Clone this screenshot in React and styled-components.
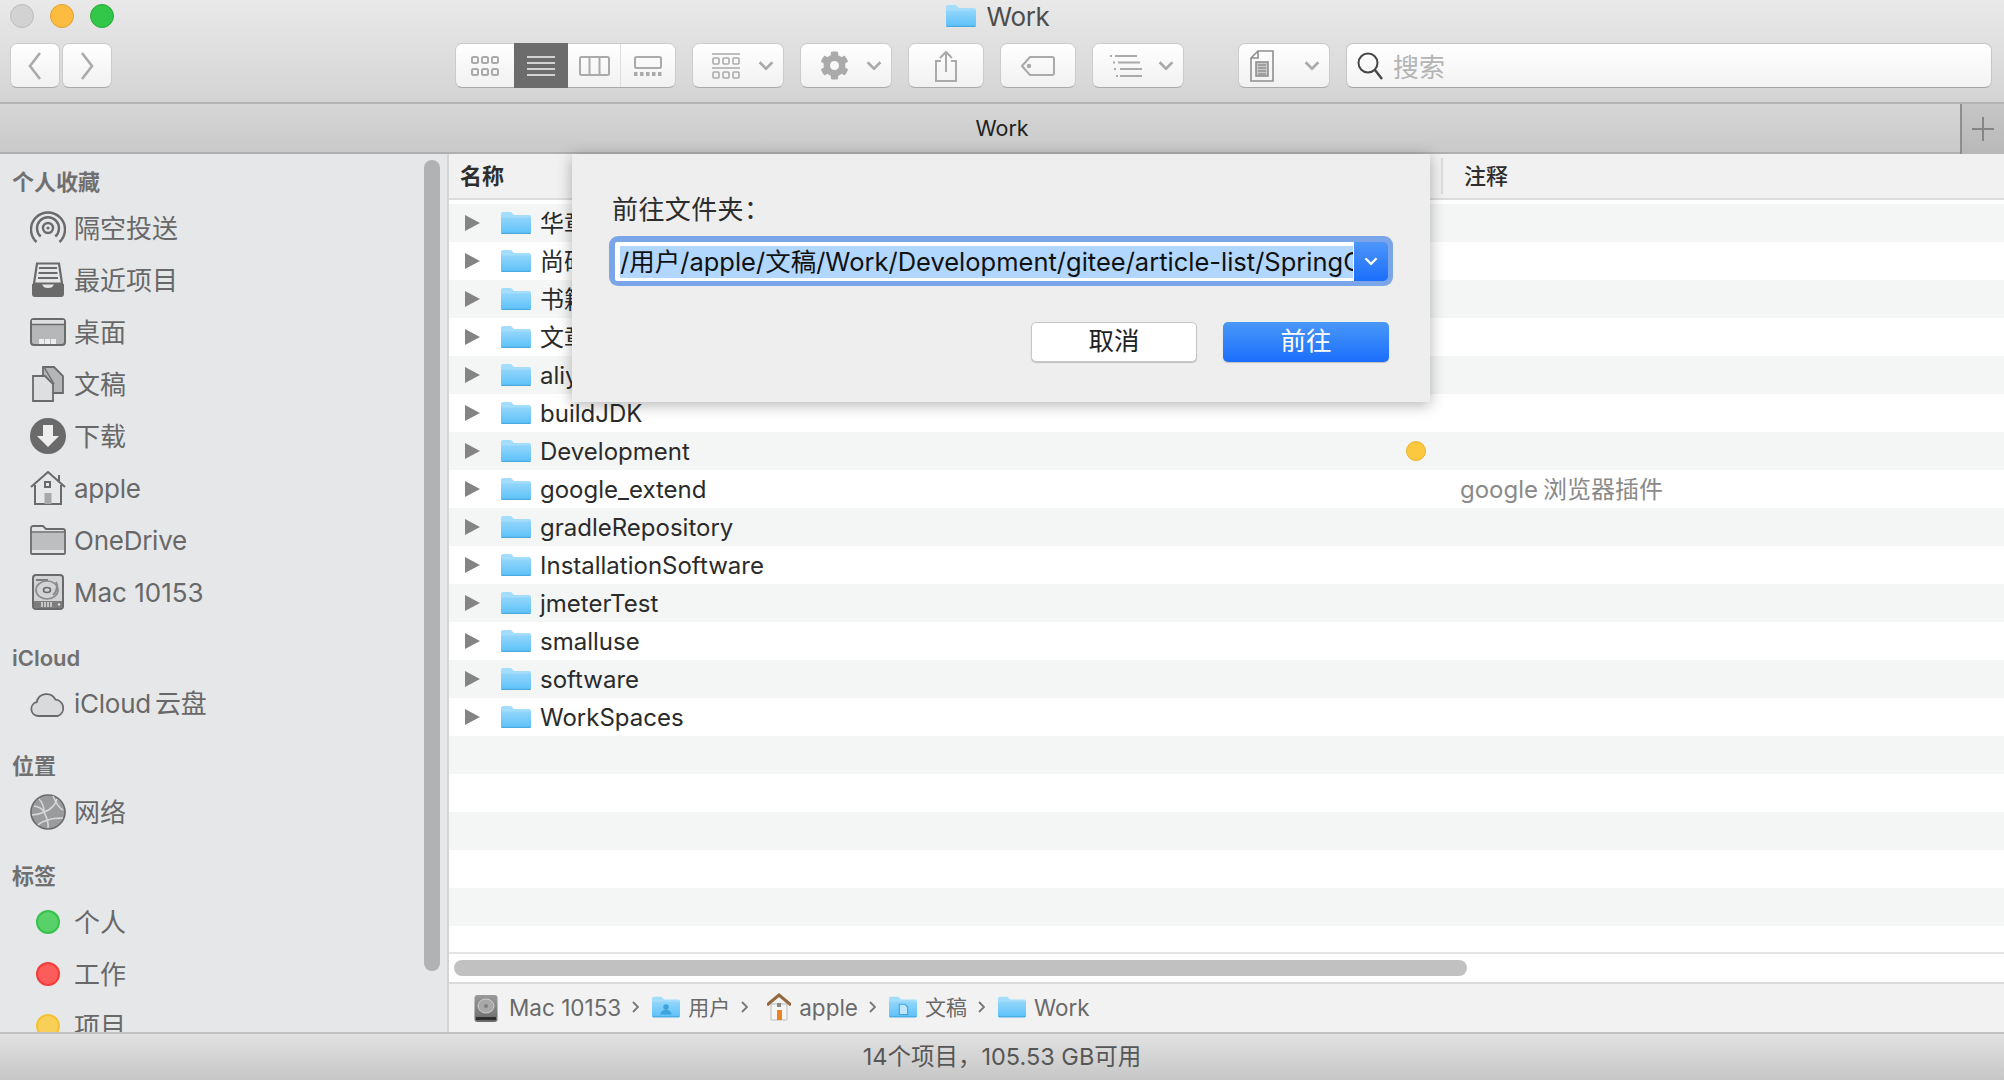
import React from "react";
import styled, { createGlobalStyle } from "styled-components";
import { FaCog } from "react-icons/fa";

const FONT = `Inter, "Noto Sans CJK SC", sans-serif`;

const Global = createGlobalStyle`
  html, body { margin: 0; padding: 0; overflow: hidden; background: #e6e7e9; }
  * { box-sizing: border-box; }
`;

const Window = styled.div`
  width: 2004px; height: 1080px; display: flex; flex-direction: column; overflow: hidden;
  font-family: ${FONT}; color: #2b2b2b;
`;
const Header = styled.header`
  height: 104px; flex: none; border-bottom: 2px solid #b4b4b4;
  background: linear-gradient(#e9e9e9, #d4d4d4);
`;
const TitleRow = styled.div`
  height: 34px; display: grid; grid-template-columns: 1fr auto 1fr; align-items: center; padding: 0 10px;
`;
const Lights = styled.div`display: flex; gap: 16px; margin-top: -2px;`;
const Light = styled.span`
  width: 24px; height: 24px; border-radius: 50%;
  background: ${p => p.$c}; border: 1px solid ${p => p.$b};
`;
const Title = styled.div`
  display: flex; align-items: center; gap: 10px; font-size: 26px; color: #4d4d4d; padding: 0 8px 2px 0; letter-spacing: -.3px;
`;
const Toolbar = styled.div`
  display: flex; margin-top: 9px; padding: 0 12px 0 10px; height: 45px;
`;
const Tool = styled.div`
  flex: none; height: 45px; width: ${p => p.$w}px; margin-left: ${p => p.$ml || 0}px;
  display: flex; align-items: center; justify-content: ${p => p.$pl ? "space-between" : "center"};
  padding: ${p => p.$pl ? `0 9px 0 ${p.$pl}px` : "0"};
  border-radius: 7px; border: 1px solid #cbcbcb; border-bottom-color: #a9a9a9;
  background: linear-gradient(#ffffff, #f1f1f1);
`;
const Segments = styled.div`
  flex: none; display: flex; height: 45px; margin-left: ${p => p.$ml}px; border-radius: 7px;
  border: 1px solid #cbcbcb; border-bottom-color: #a9a9a9; background: linear-gradient(#fff, #f1f1f1);
`;
const Segment = styled.div`
  width: ${p => p.$w}px; display: flex; align-items: center; justify-content: center;
  background: ${p => p.$on ? "#6c6c6c" : "transparent"};
  border-left: ${p => p.$line ? "1px solid #dedede" : "0"};
  margin: ${p => p.$on ? "-1px 0" : "0"};
`;
const Search = styled.div`
  flex: 1; height: 45px; margin-left: 16px; display: flex; align-items: center; gap: 10px; padding-left: 10px;
  border-radius: 7px; border: 1px solid #c6c6c6; border-bottom-color: #a5a5a5;
  background: linear-gradient(#fff, #f3f3f3); color: #b4b4b4; font-size: 26px;
`;
const TabBar = styled.div`
  height: 50px; flex: none; display: flex; border-bottom: 2px solid #b0b0b0;
  background: linear-gradient(#d6d6d6, #c9c9c9);
`;
const Tab = styled.div`flex: 1; display: flex; align-items: center; justify-content: center; font-size: 21.5px; color: #222; padding: 0 0 0 44px;`;
const AddTab = styled.div`
  width: 44px; flex: none; display: flex; align-items: center; justify-content: center;
  border-left: 2px solid #8e8e8e; background: linear-gradient(#c6c6c6, #b8b8b8); margin-bottom: -2px;
`;
const Body = styled.div`flex: 1; min-height: 0; display: flex; position: relative;`;
const Sidebar = styled.aside`
  width: 449px; flex: none; position: relative; overflow: hidden; background: #e6e7e9;
  border-right: 2px solid #d4d5d6; padding-top: 8px;
`;
const SectionLabel = styled.div`
  height: 40px; margin-top: ${p => p.$mt || 0}px; padding: 0 0 ${p => p.$lift ? 5 : 0}px 12px; display: flex; align-items: center;
  font-size: 22px; font-weight: 600; color: #707070;
`;
const Item = styled.div`
  height: 52px; display: flex; align-items: center; padding-left: 30px; gap: 8px; font-size: 26px; color: #686868;
`;
const ItemText = styled.span`padding-bottom: ${p => p.$lift || 0}px; letter-spacing: ${p => p.$tight ? "-.25px" : "0"};`;
const Hair = styled.span`display: inline-block; width: ${p => p.$w}px;`;
const IconBox = styled.span`width: 36px; height: 36px; flex: none; display: flex; align-items: center; justify-content: center;`;
const Dot = styled.span`
  width: 24px; height: 24px; border-radius: 50%; background: ${p => p.$c}; border: 2px solid ${p => p.$b};
`;
const SideThumb = styled.div`
  position: absolute; left: 424px; top: 6px; width: 16px; height: 811px; border-radius: 8px; background: #b1b2b3;
`;
const Files = styled.main`flex: 1; min-width: 0; display: flex; flex-direction: column; background: #fff;`;
const ColumnHead = styled.div`
  height: 46px; flex: none; display: flex; align-items: center; background: #f1f1f1; border-bottom: 2px solid #dcdcdc;
  font-size: 22px; font-weight: 500; color: #2e2e2e;
`;
const HeadName = styled.span`margin-left: 11px; width: 981px; font-weight: 600; padding-bottom: 5px;`;
const HeadRule = styled.span`width: 2px; height: 36px; background: #dcdcdc;`;
const HeadNote = styled.span`margin-left: 21px; padding-bottom: 5px;`;
const Rows = styled.div`flex: 1; min-height: 0; overflow: hidden; padding-top: 4px;`;
const Row = styled.div`
  height: 38px; display: grid; grid-template-columns: 52px 39px 866px 55px 1fr; align-items: center;
  background: ${p => p.$odd ? "#f4f5f5" : "#ffffff"}; font-size: 24px; color: #2b2b2b;
`;
const Arrow = styled.span`padding-left: 16px; display: flex;`;
const RowName = styled.span`white-space: nowrap; padding-bottom: ${p => p.$lift ? 3 : 0}px;`;
const Note = styled.span`color: #8a8a8a; font-size: 24px; padding-bottom: 3px; margin-left: -1px;`;
const StatusDot = styled.span`width: 20px; height: 20px; border-radius: 50%; background: #fbc840; border: 1px solid #ecb22e;`;
const HTrack = styled.div`height: 30px; flex: none; border-top: 2px solid #e4e4e4; padding: 6px 0 0 5px; background: #fff;`;
const HThumb = styled.div`width: 1013px; height: 16px; border-radius: 8px; background: #c1c1c1;`;
const PathBar = styled.div`
  height: 50px; flex: none; border-top: 2px solid #dadada; background: #f2f2f2;
  display: flex; align-items: center; padding: 0 0 2px 25px; font-size: 22.5px; color: #6a6a6a;
`;
const Crumb = styled.span`display: flex; align-items: center; gap: ${p => p.$gap || 8}px; margin-left: ${p => p.$ml || 0}px;`;
const CrumbText = styled.span`font-size: ${p => p.$cjk ? 21 : 22.5}px; padding-bottom: ${p => p.$cjk ? 2 : 0}px;`;
const Sep = styled.svg`margin: 0 13px 0 11px; flex: none;`;
const StatusBar = styled.footer`
  height: 48px; flex: none; display: flex; align-items: center; justify-content: center; padding-bottom: 4px;
  border-top: 2px solid #c2c2c2; background: linear-gradient(#e2e2e2, #c6c6c6); font-size: 23.5px; color: #565656;
`;
const Sheet = styled.div`
  position: absolute; top: 0; left: 572px; width: 858px; height: 248px; padding: 40px 37px 0;
  background: #eeeeee; box-shadow: 0 3px 14px rgba(0,0,0,.3);
`;
const SheetLabel = styled.div`height: 36px; line-height: 32px; font-size: 26px; color: #2c2c2c; padding-left: 3px; letter-spacing: .4px;`;
const Combo = styled.div`
  margin-top: 6px; height: 50px; padding: 6px 5px 5px 6px; display: flex; border-radius: 9px; background: #7ba5e9;
`;
const Field = styled.div`flex: 1; min-width: 0; background: #fff; padding: 4px 1px 3px 5px; border-radius: 2px 0 0 2px;`;
const Selected = styled.div`
  height: 32px; line-height: 32px; overflow: hidden; white-space: nowrap; background: #b2d7ff; font-size: 25.5px; color: #111;
`;
const ComboBtn = styled.div`
  width: 34px; flex: none; display: flex; align-items: center; justify-content: center;
  border-radius: 0 5px 5px 0; background: linear-gradient(#4d96f9, #1b6efb);
`;
const Actions = styled.div`display: flex; justify-content: flex-end; gap: 26px; margin: 36px 4px 0 0;`;
const Button = styled.div`
  width: 166px; height: 40px; display: flex; align-items: center; justify-content: center; font-size: 25.5px; border-radius: 5px;
  padding-bottom: 7px;
  color: ${p => p.$primary ? "#fff" : "#222"};
  background: ${p => p.$primary ? "linear-gradient(#4a98f9, #1a6efb)" : "#fff"};
  border: ${p => p.$primary ? "0" : "1px solid #c6c6c6"};
  box-shadow: 0 1px 1px rgba(0,0,0,.2);
`;

const Folder = ({ w = 30, h = 24, glyph }) => (
  <svg width={w} height={h} viewBox="0 0 30 24">
    <defs>
      <linearGradient id="fg" x1="0" y1="0" x2="0" y2="1"><stop offset="0" stopColor="#92d6fb" /><stop offset="1" stopColor="#5cc0f8" /></linearGradient>
    </defs>
    <path d="M0 3a2 2 0 0 1 2-2h8l3 3h15a2 2 0 0 1 2 2v15a2 2 0 0 1-2 2H2a2 2 0 0 1-2-2z" fill="#a3ddfb" />
    <path d="M0 6.5h30v14.5a2 2 0 0 1-2 2H2a2 2 0 0 1-2-2z" fill="url(#fg)" />
    <path d="M0.5 22.4h29" stroke="#4ba9de" strokeWidth="1.2" />
    {glyph === "user" && <g fill="#3ea3dd"><circle cx="15" cy="12" r="3" /><path d="M9 20a6 5 0 0 1 12 0z" /></g>}
    {glyph === "doc" && <path d="M11 9h6l3 3v8h-9z" fill="#bfe6fc" stroke="#3ea3dd" strokeWidth="1.2" />}
  </svg>
);
const Tri = () => <svg width="15" height="16" viewBox="0 0 15 16"><path d="M0 0l15 8-15 8z" fill="#848484" /></svg>;
const Chev = ({ c = "#a9a9a9", w = 16, h = 10 }) => <svg width={w} height={h} viewBox="0 0 15 9"><path d="M1.5 1l6 6 6-6" fill="none" stroke={c} strokeWidth="2.4" /></svg>;
const Grid = ({ c = "#aaa" }) => (
  <svg width="28" height="20" viewBox="0 0 28 20" fill="none" stroke={c} strokeWidth="2">
    {[1, 11, 21].map(x => [1, 13].map(y => <rect key={x + "-" + y} x={x} y={y} width="6" height="6" rx="1.5" />))}
  </svg>
);
const Lines = () => <svg width="28" height="20" viewBox="0 0 28 20" fill="#d2d2d2">{[0, 6, 12, 18].map(y => <rect key={y} y={y} width="28" height="2" />)}</svg>;
const Cols = () => <svg width="31" height="20" viewBox="0 0 31 20" fill="none" stroke="#aaa" strokeWidth="2"><rect x="1" y="1" width="29" height="18" rx="1.5" /><path d="M10.5 1v18M20.5 1v18" /></svg>;
const Gallery = () => (
  <svg width="28" height="20" viewBox="0 0 28 20" fill="none" stroke="#aaa" strokeWidth="2">
    <rect x="1" y="1" width="26" height="11" rx="1.5" />
    {[0, 6, 12, 18, 24].map(x => <rect key={x} x={x} y="16" width="3.5" height="4" fill="#aaa" stroke="none" />)}
  </svg>
);
const GroupIcon = () => (
  <svg width="28" height="26" viewBox="0 0 28 26" fill="none" stroke="#aaa" strokeWidth="1.6">
    <path d="M0 1h28M0 15h28" />
    {[1, 11, 21].map(x => [5, 19].map(y => <rect key={x + "-" + y} x={x} y={y} width="6" height="6" rx="1.2" />))}
  </svg>
);
const Share = () => (
  <svg width="24" height="32" viewBox="0 0 24 32" fill="none" stroke="#aaa" strokeWidth="2">
    <path d="M7 11H2v20h20V11h-5M12 22V2M6 8l6-6 6 6" />
  </svg>
);
const TagIcon = () => (
  <svg width="34" height="20" viewBox="0 0 34 20" fill="none" stroke="#aaa" strokeWidth="2">
    <path d="M9 1h22a2 2 0 0 1 2 2v14a2 2 0 0 1-2 2H9L1 10z" /><circle cx="8" cy="10" r="1.2" fill="#aaa" />
  </svg>
);
const ActionList = () => (
  <svg width="32" height="22" viewBox="0 0 32 22" fill="#aaa">
    <rect x="0" y="0" width="2" height="2" /><rect x="5" y="0" width="22" height="2" />
    <rect x="3" y="6.5" width="2" height="2" /><rect x="8" y="6.5" width="22" height="2" />
    <rect x="4" y="13" width="2" height="2" /><rect x="10" y="13" width="22" height="2" />
    <rect x="6" y="20" width="2" height="2" /><rect x="10" y="20" width="22" height="2" />
  </svg>
);
const DocIcon = () => (
  <svg width="24" height="32" viewBox="0 0 24 32" fill="none" stroke="#8f8f8f" strokeWidth="1.6">
    <path d="M8 1h15v30H1V8zM1 8h7V1" /><rect x="6" y="12" width="12" height="14" fill="#c9c9c9" /><path d="M8 15h8M8 18h8M8 21h8M8 24h8" stroke="#777" strokeWidth="1" />
  </svg>
);
const Magnifier = () => (
  <svg width="26" height="28" viewBox="0 0 26 28" fill="none" stroke="#454545" strokeWidth="2"><circle cx="11" cy="11" r="9.5" /><path d="M18 18l7 9" strokeWidth="2.4" /></svg>
);
const Plus = () => <svg width="22" height="24" viewBox="0 0 22 24" stroke="#858585" strokeWidth="2"><path d="M0 12h22M11 0v24" /></svg>;

const G = "#6a6a6a";
const AirDrop = () => (
  <svg width="36" height="36" viewBox="0 0 36 36" fill="none" stroke={G} strokeWidth="2.4">
    <path d="M6.5 32A17 17 0 1 1 29.5 32" /><path d="M10.7 26.5A11 11 0 1 1 25.3 26.5" />
    <circle cx="18" cy="18" r="5" /><circle cx="18" cy="18" r="1.6" fill={G} stroke="none" />
  </svg>
);
const Recents = () => (
  <svg width="36" height="36" viewBox="0 0 36 36">
    <path d="M7 1.5h22l3 20H4z" fill="#e6e7e9" stroke={G} strokeWidth="2.2" />
    <path d="M9 6h18M8.5 11h19M8 16h20" stroke={G} strokeWidth="2" />
    <path d="M2 22h10c1 3 3 4 6 4s5-1 6-4h10v10a3 3 0 0 1-3 3H5a3 3 0 0 1-3-3z" fill={G} />
  </svg>
);
const Desktop = () => (
  <svg width="36" height="28" viewBox="0 0 36 28">
    <rect x="1" y="1" width="34" height="26" rx="3" fill="#b6b7b8" stroke={G} strokeWidth="2" />
    <path d="M2 2h32v4H2z" fill="#dedfe0" /><path d="M1 6.5h34" stroke={G} strokeWidth="1.6" />
    {[9, 15, 21].map(x => <rect key={x} x={x} y="21" width="5" height="5" fill="#eee" />)}
  </svg>
);
const Docs = () => (
  <svg width="34" height="36" viewBox="0 0 34 36">
    <path d="M12 1h11l9 9v17H12z" fill="#b4b5b6" stroke={G} strokeWidth="1.8" />
    <path d="M2 10h12l8 8v17H2z" fill="#dedfe0" stroke={G} strokeWidth="1.8" />
    <path d="M13 1l10 17" stroke={G} strokeWidth="1.4" fill="none" />
  </svg>
);
const Download = () => (
  <svg width="36" height="36" viewBox="0 0 36 36"><circle cx="18" cy="18" r="18" fill={G} /><path d="M13 7h10v11h6L18 29 7 18h6z" fill="#eeeeee" /></svg>
);
const Home = () => (
  <svg width="36" height="34" viewBox="0 0 36 34" fill="none" stroke={G} strokeWidth="2">
    <path d="M1 16L18 1l17 15M29 4v7" /><path d="M5 14v19h26V14" /><rect x="15" y="11" width="5" height="5" />
    <rect x="14.5" y="22" width="7" height="11" fill="#a8a8a8" stroke="none" />
  </svg>
);
const GrayFolder = () => (
  <svg width="36" height="30" viewBox="0 0 36 30">
    <path d="M1 3a2 2 0 0 1 2-2h10l3 3h17a2 2 0 0 1 2 2v22a1 1 0 0 1-1 1H2a1 1 0 0 1-1-1z" fill="#e3e4e5" stroke={G} strokeWidth="1.8" />
    <path d="M2 8h32v17H2z" fill="#bdbebf" /><path d="M1 7h34" stroke={G} strokeWidth="1.4" />
  </svg>
);
const Disk = () => (
  <svg width="32" height="36" viewBox="0 0 32 36">
    <rect x="1" y="1" width="30" height="34" rx="3" fill="#d2d3d4" stroke={G} strokeWidth="2" />
    <path d="M4 6h12" stroke={G} strokeWidth="1.6" /><ellipse cx="15" cy="16" rx="11" ry="9" fill="none" stroke="#8a8a8a" strokeWidth="1.6" />
    <ellipse cx="15" cy="16" rx="3.5" ry="2.5" fill="none" stroke={G} strokeWidth="1.6" />
    <path d="M24 8c2 3 1 10-3 13" stroke="#8a8a8a" strokeWidth="2" fill="none" />
    <rect x="2" y="27" width="28" height="7" fill="#7d7d7d" /><path d="M10 28v5M13 28v5M16 28v5M19 28v5" stroke="#ddd" strokeWidth="1.5" />
    <circle cx="27" cy="30.5" r="1.2" fill="#ddd" />
  </svg>
);
const Cloud = () => (
  <svg width="36" height="26" viewBox="0 0 36 26">
    <path d="M8 25a7 7 0 0 1-1.3-13.8A10 10 0 0 1 25.5 8.7 8.5 8.5 0 0 1 28 25z" fill="#d9dadb" stroke={G} strokeWidth="1.8" />
  </svg>
);
const Globe = () => (
  <svg width="36" height="36" viewBox="0 0 36 36">
    <circle cx="18" cy="18" r="17" fill="#9a9b9c" stroke={G} strokeWidth="1.6" />
    <path d="M4 12c6 1 9 4 10 6s5 9 4 16M9 5c3 3 5 8 5 13M14 18c-4 2-8 3-12 3M14 18c6-2 11-6 13-13M18 26c5-2 10-2 15-2M23 2c3 7 6 12 10 14M8 31c3-3 6-4 10-5" stroke="#d8d9da" strokeWidth="1.5" fill="none" />
  </svg>
);
const MiniDisk = () => (
  <svg width="24" height="36" viewBox="0 0 24 36">
    <defs><linearGradient id="md" x1="0" y1="0" x2="0" y2="1"><stop offset="0" stopColor="#9a9a9a" /><stop offset="1" stopColor="#6a6a6a" /></linearGradient></defs>
    <rect x="0.5" y="6" width="23" height="27" rx="3" fill="url(#md)" />
    <ellipse cx="12" cy="17" rx="8" ry="7" fill="#a8a8a8" stroke="#cfcfcf" /><circle cx="12" cy="17" r="2" fill="#808080" />
    <rect x="2" y="28" width="20" height="3" fill="#2e2e2e" />
  </svg>
);
const MiniHome = () => (
  <svg width="24" height="28" viewBox="0 0 24 28">
    <path d="M4 11h16v16H4z" fill="#f5f5f5" stroke="#bbb" /><path d="M0 12L12 2l12 10" fill="none" stroke="#92693f" strokeWidth="3" />
    <rect x="10" y="17" width="5" height="10" fill="#ee8322" /><rect x="10" y="10" width="4" height="4" fill="#888" />
  </svg>
);
const SepIcon = () => <Sep width="7" height="12" viewBox="0 0 7 12"><path d="M1 1l5 5-5 5" fill="none" stroke="#777" strokeWidth="1.8" /></Sep>;

const favourites = [
  [AirDrop, "隔空投送", 3], [Recents, "最近项目", 3], [Desktop, "桌面", 3], [Docs, "文稿", 3],
  [Download, "下载", 3], [Home, "apple", 0, true], [GrayFolder, "OneDrive", 0, true], [Disk, "Mac 10153", 0],
];
const names = ["华章", "尚硅谷", "书籍", "文章", "aliyun", "buildJDK", "Development", "google_extend", "gradleRepository", "InstallationSoftware", "jmeterTest", "smalluse", "software", "WorkSpaces"];
const blanks = Array.from({ length: 6 });

export default function App() {
  return (
    <Window>
      <Global />
      <Header>
        <TitleRow>
          <Lights>
            <Light $c="#d2d2d2" $b="#bcbcbc" />
            <Light $c="#fdbc40" $b="#e0a030" />
            <Light $c="#33c748" $b="#27a83a" />
          </Lights>
          <Title><Folder w={30} h={24} />Work</Title>
        </TitleRow>
        <Toolbar>
          <Tool $w={50}><svg width="14" height="30" viewBox="0 0 14 30"><path d="M12 2L2 15l10 13" fill="none" stroke="#aaa" strokeWidth="2.6" /></svg></Tool>
          <Tool $w={50} $ml={2}><svg width="14" height="30" viewBox="0 0 14 30"><path d="M2 2l10 13L2 28" fill="none" stroke="#aaa" strokeWidth="2.6" /></svg></Tool>
          <Segments $ml={343}>
            <Segment $w={58}><Grid /></Segment>
            <Segment $w={54} $on><Lines /></Segment>
            <Segment $w={52}><Cols /></Segment>
            <Segment $w={55} $line><Gallery /></Segment>
          </Segments>
          <Tool $w={92} $ml={16} $pl={19}><GroupIcon /><Chev /></Tool>
          <Tool $w={92} $ml={16} $pl={19}><FaCog size={29} color="#aaa" /><Chev /></Tool>
          <Tool $w={76} $ml={16}><Share /></Tool>
          <Tool $w={76} $ml={16}><TagIcon /></Tool>
          <Tool $w={92} $ml={16} $pl={17}><ActionList /><Chev /></Tool>
          <Tool $w={92} $ml={54} $pl={11}><DocIcon /><Chev /></Tool>
          <Search><Magnifier />搜索</Search>
        </Toolbar>
      </Header>
      <TabBar>
        <Tab>Work</Tab>
        <AddTab><Plus /></AddTab>
      </TabBar>
      <Body>
        <Sidebar>
          <SectionLabel $lift>个人收藏</SectionLabel>
          {favourites.map(([Ic, label, lift, tight]) => <Item key={label}><IconBox><Ic /></IconBox><ItemText $lift={lift} $tight={tight}>{label}</ItemText></Item>)}
          <SectionLabel $mt={20}>iCloud</SectionLabel>
          <Item><IconBox><Cloud /></IconBox><ItemText $lift={6} $tight>iCloud<Hair $w={4} />云盘</ItemText></Item>
          <SectionLabel $mt={16} $lift>位置</SectionLabel>
          <Item><IconBox><Globe /></IconBox><ItemText $lift={3}>网络</ItemText></Item>
          <SectionLabel $mt={18} $lift>标签</SectionLabel>
          <Item><IconBox><Dot $c="#57d168" $b="#36c24c" /></IconBox><ItemText $lift={3}>个人</ItemText></Item>
          <Item><IconBox><Dot $c="#fc5d5b" $b="#f43c3a" /></IconBox><ItemText $lift={3}>工作</ItemText></Item>
          <Item><IconBox><Dot $c="#f8d058" $b="#f5c233" /></IconBox><ItemText $lift={3}>项目</ItemText></Item>
          <SideThumb />
        </Sidebar>
        <Files>
          <ColumnHead>
            <HeadName>名称</HeadName>
            <HeadRule />
            <HeadNote>注释</HeadNote>
          </ColumnHead>
          <Rows>
            {names.map((n, i) => (
              <Row key={n} $odd={i % 2 === 0}>
                <Arrow><Tri /></Arrow>
                <Folder />
                <RowName $lift={i < 4}>{n}</RowName>
                {n === "Development" ? <StatusDot /> : <span />}
                {n === "google_extend" ? <Note>google<Hair $w={5} />浏览器插件</Note> : <span />}
              </Row>
            ))}
            {blanks.map((_, i) => <Row key={i} $odd={i % 2 === 0} />)}
          </Rows>
          <HTrack><HThumb /></HTrack>
          <PathBar>
            <Crumb $gap={11}><MiniDisk /><CrumbText>Mac 10153</CrumbText></Crumb><SepIcon />
            <Crumb><Folder w={28} h={26} glyph="user" /><CrumbText $cjk>用户</CrumbText></Crumb><SepIcon />
            <Crumb $ml={6}><MiniHome /><CrumbText>apple</CrumbText></Crumb><SepIcon />
            <Crumb><Folder w={28} h={26} glyph="doc" /><CrumbText $cjk>文稿</CrumbText></Crumb><SepIcon />
            <Crumb><Folder w={28} h={26} /><CrumbText>Work</CrumbText></Crumb>
          </PathBar>
        </Files>
        <Sheet>
          <SheetLabel>前往文件夹：</SheetLabel>
          <Combo>
            <Field><Selected>/用户/apple/文稿/Work/Development/gitee/article-list/SpringCloud</Selected></Field>
            <ComboBtn><Chev c="#ffffff" w={14} h={9} /></ComboBtn>
          </Combo>
          <Actions>
            <Button>取消</Button>
            <Button $primary>前往</Button>
          </Actions>
        </Sheet>
      </Body>
      <StatusBar>14个项目，105.53 GB可用</StatusBar>
    </Window>
  );
}
